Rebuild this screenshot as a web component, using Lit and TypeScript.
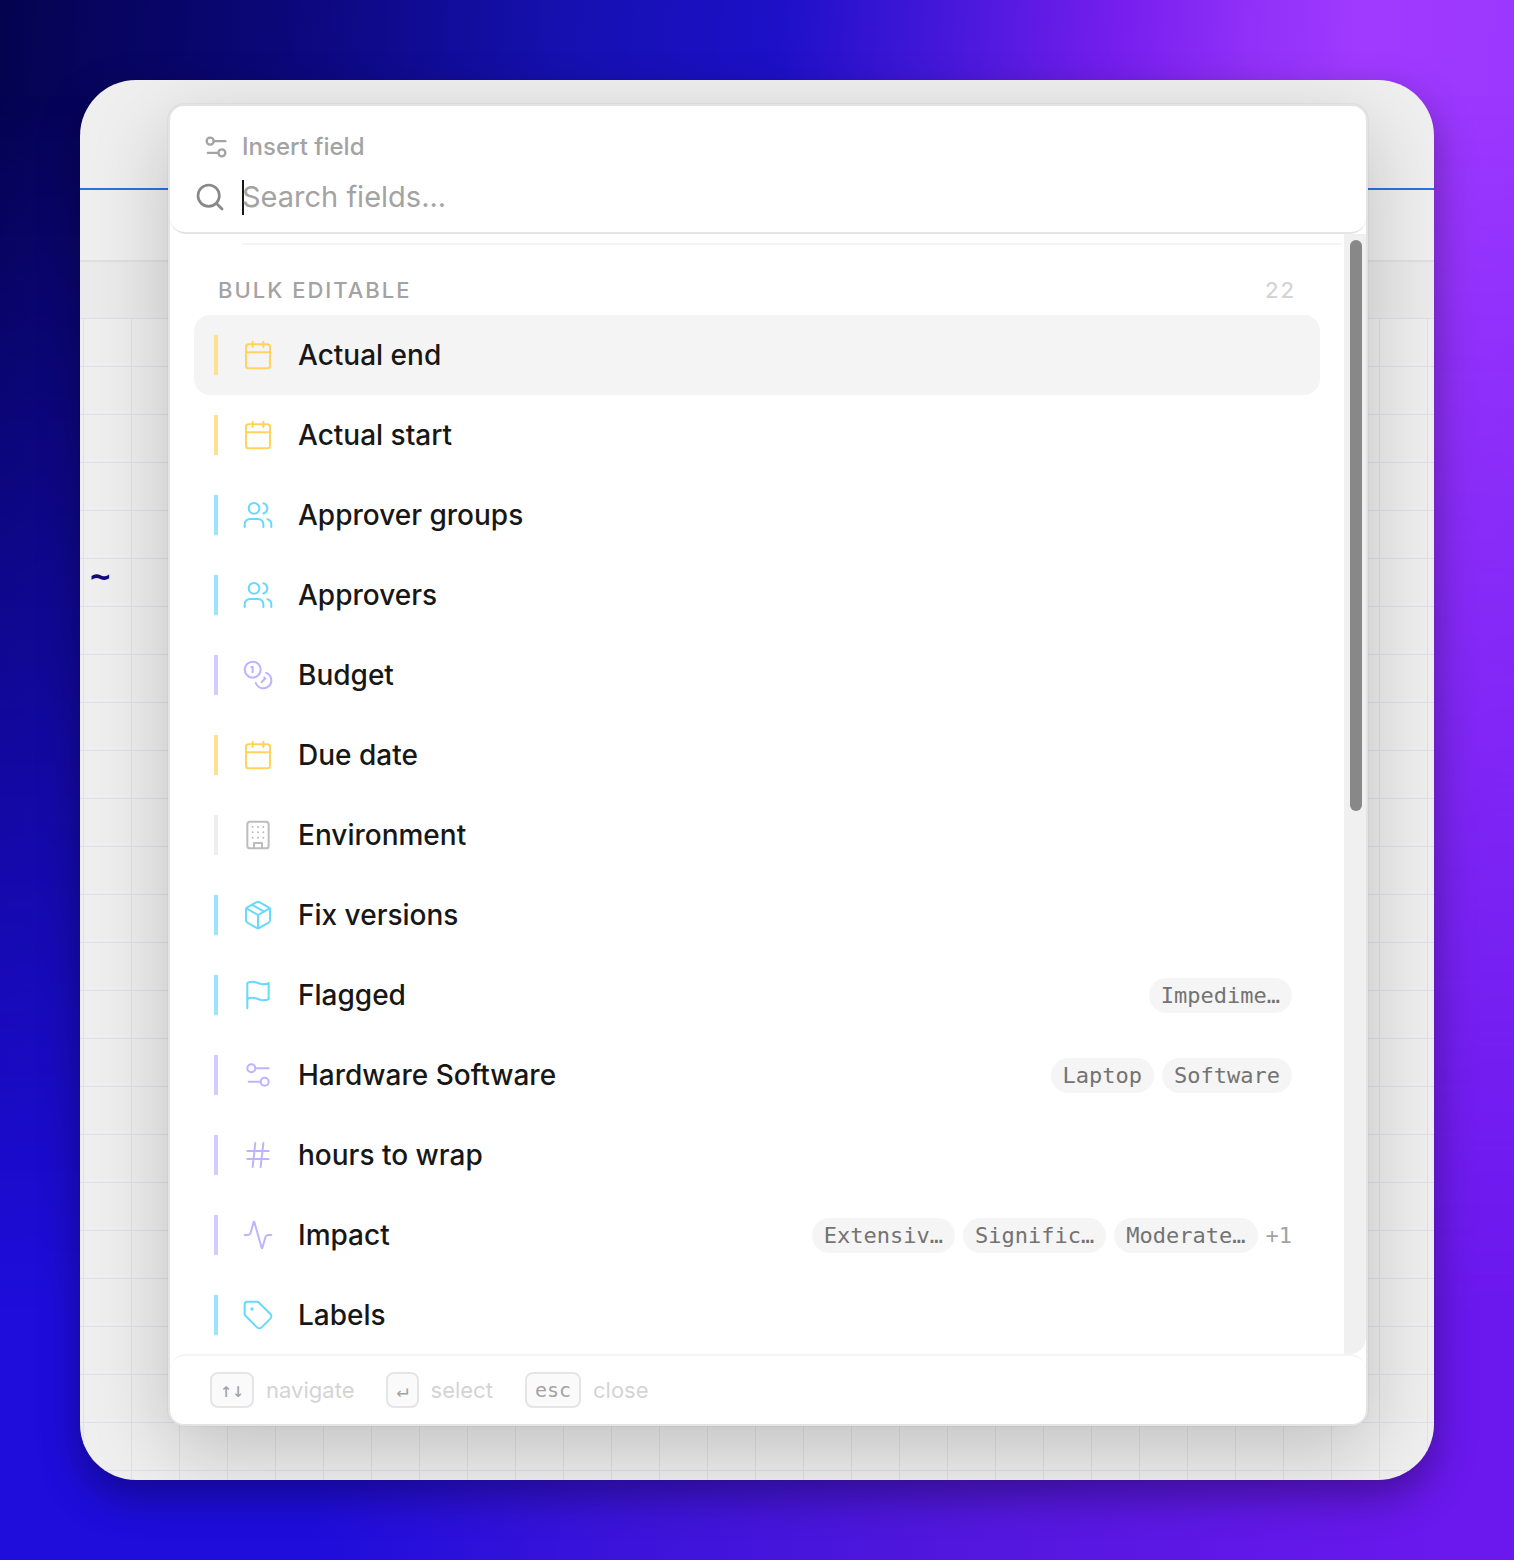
import { LitElement, html, css, svg, nothing, type SVGTemplateResult } from "lit";
import { customElement, property, state } from "lit/decorators.js";
import { classMap } from "lit/directives/class-map.js";
import { styleMap } from "lit/directives/style-map.js";

const ICONS: Record<string, SVGTemplateResult> = {
  settings: svg`<path d="M20 7h-9"/><path d="M14 17H5"/><circle cx="17" cy="17" r="3"/><circle cx="7" cy="7" r="3"/>`,
  search: svg`<circle cx="11" cy="11" r="8"/><path d="m21 21-4.3-4.3"/>`,
  calendar: svg`<path d="M8 2v4"/><path d="M16 2v4"/><rect width="18" height="18" x="3" y="4" rx="2"/><path d="M3 10h18"/>`,
  users: svg`<path d="M16 21v-2a4 4 0 0 0-4-4H6a4 4 0 0 0-4 4v2"/><circle cx="9" cy="7" r="4"/><path d="M22 21v-2a4 4 0 0 0-3-3.87"/><path d="M16 3.13a4 4 0 0 1 0 7.75"/>`,
  coins: svg`<circle cx="8" cy="8" r="6"/><path d="M18.09 10.37A6 6 0 1 1 10.34 18"/><path d="M7 6h1v4"/><path d="m16.71 13.88.7.71-2.82 2.82"/>`,
  building: svg`<rect width="16" height="20" x="4" y="2" rx="2"/><path d="M9 22v-4h6v4"/><path d="M8 6h.01M12 6h.01M16 6h.01M8 10h.01M12 10h.01M16 10h.01M8 14h.01M12 14h.01M16 14h.01"/>`,
  package: svg`<path d="m7.5 4.27 9 5.15"/><path d="M21 8a2 2 0 0 0-1-1.73l-7-4a2 2 0 0 0-2 0l-7 4A2 2 0 0 0 3 8v8a2 2 0 0 0 1 1.73l7 4a2 2 0 0 0 2 0l7-4A2 2 0 0 0 21 16Z"/><path d="m3.3 7 8.7 5 8.7-5"/><path d="M12 22V12"/>`,
  flag: svg`<path d="M4 15s1-1 4-1 5 2 8 2 4-1 4-1V3s-1 1-4 1-5-2-8-2-4 1-4 1z"/><path d="M4 22v-7"/>`,
  hash: svg`<path d="M4 9h16"/><path d="M4 15h16"/><path d="M10 3 8 21"/><path d="m16 3-2 18"/>`,
  activity: svg`<path d="M22 12h-2.48a2 2 0 0 0-1.93 1.46l-2.35 8.36a.25.25 0 0 1-.48 0L9.24 2.18a.25.25 0 0 0-.48 0l-2.35 8.36A2 2 0 0 1 4.49 12H2"/>`,
  tag: svg`<path d="M12.586 2.586A2 2 0 0 0 11.172 2H4a2 2 0 0 0-2 2v7.172a2 2 0 0 0 .586 1.414l8.704 8.704a2.426 2.426 0 0 0 3.42 0l6.58-6.58a2.426 2.426 0 0 0 0-3.42z"/><circle cx="7.5" cy="7.5" r=".5" fill="currentColor"/>`,
};

type Tone = "amber" | "sky" | "violet" | "gray";

interface Field {
  name: string;
  icon: string;
  tone: Tone;
  values?: string[];
  more?: number;
}

const FIELDS: Field[] = [
  { name: "Actual end", icon: "calendar", tone: "amber" },
  { name: "Actual start", icon: "calendar", tone: "amber" },
  { name: "Approver groups", icon: "users", tone: "sky" },
  { name: "Approvers", icon: "users", tone: "sky" },
  { name: "Budget", icon: "coins", tone: "violet" },
  { name: "Due date", icon: "calendar", tone: "amber" },
  { name: "Environment", icon: "building", tone: "gray" },
  { name: "Fix versions", icon: "package", tone: "sky" },
  { name: "Flagged", icon: "flag", tone: "sky", values: ["Impedime…"] },
  { name: "Hardware Software", icon: "settings", tone: "violet", values: ["Laptop", "Software"] },
  { name: "hours to wrap", icon: "hash", tone: "violet" },
  { name: "Impact", icon: "activity", tone: "violet", values: ["Extensiv…", "Signific…", "Moderate…"], more: 1 },
  { name: "Labels", icon: "tag", tone: "sky" },
];

@customElement("line-icon")
class LineIcon extends LitElement {
  @property() name = "";

  static styles = css`
    :host {
      display: block;
      flex: none;
      width: 32px;
      height: 32px;
    }
    .icon {
      display: block;
      width: 100%;
      height: 100%;
      fill: none;
      stroke: currentColor;
      stroke-width: var(--icon-stroke, 1.5);
      stroke-linecap: round;
      stroke-linejoin: round;
    }
  `;

  render() {
    return html`<svg class="icon" viewBox="0 0 24 24" aria-hidden="true">${ICONS[this.name]}</svg>`;
  }
}

@customElement("field-row")
class FieldRow extends LitElement {
  @property({ attribute: false }) field!: Field;
  @property({ type: Boolean }) active = false;

  static styles = css`
    :host {
      display: block;
    }
    .row {
      display: flex;
      align-items: center;
      gap: 24px;
      box-sizing: border-box;
      width: 100%;
      height: 80px;
      padding: 0 28px 0 20px;
      border: 0;
      border-radius: 16px;
      background: transparent;
      color: #171717;
      font: 500 28px/40px Inter, "Liberation Sans", sans-serif;
      text-align: left;
      cursor: pointer;
    }
    .active {
      background: #f4f4f4;
    }
    .bar {
      flex: none;
      width: 4px;
      height: 40px;
      background: var(--bar);
    }
    .glyph {
      color: var(--glyph);
      --icon-stroke: 1.5;
    }
    .name {
      flex: 1;
      min-width: 0;
      overflow: hidden;
      white-space: nowrap;
      text-overflow: ellipsis;
    }
    .values {
      display: flex;
      align-items: center;
      gap: 8px;
      font: 400 22px/35px "DejaVu Sans Mono", monospace;
    }
    .chip {
      padding: 0 12px;
      border-radius: 18px;
      background: #f5f5f5;
      color: #737373;
    }
    .more {
      color: #a3a3a3;
    }
    .amber {
      --bar: #ffe08f;
      --glyph: #ffd35c;
    }
    .sky {
      --bar: #99e5ff;
      --glyph: #66d9ff;
    }
    .violet {
      --bar: #d3ccff;
      --glyph: #beb3ff;
    }
    .gray {
      --bar: #eeeeee;
      --glyph: #bdbdbd;
    }
  `;

  render() {
    const { name, icon, tone, values, more } = this.field;
    return html`
      <button type="button" class=${classMap({ row: true, active: this.active, [tone]: true })}>
        <span class="bar"></span>
        <line-icon class="glyph" name=${icon}></line-icon>
        <span class="name">${name}</span>
        ${values
          ? html`<span class="values">
              ${values.map((v) => html`<span class="chip">${v}</span>`)}
              ${more ? html`<span class="more">+${more}</span>` : nothing}
            </span>`
          : nothing}
      </button>
    `;
  }
}

@customElement("app-root")
class AppRoot extends LitElement {
  @state() private active = 0;
  @state() private query = "";
  private readonly visibleRatio = 0.515;

  static styles = css`
    :host {
      display: block;
      font-family: Inter, "Liberation Sans", sans-serif;
    }
    .desktop {
      display: grid;
      grid-template: minmax(0, 1fr) / minmax(0, 1fr);
      height: 100vh;
      background: linear-gradient(
        94deg,
        #04034f 0%,
        #0b0778 17%,
        #1610b0 35%,
        #1d10c8 48%,
        #4818dc 59%,
        #761eee 69%,
        #9030f8 77%,
        #a03aff 84%,
        #9a36ff 96%
      );
    }
    .glow,
    .window {
      grid-area: 1 / 1;
    }
    .glow {
      background: linear-gradient(94deg, #1e0ddb 0%, #1e0ddb 26%, #3a13da 44%, #5217de 66%, #6a18ee 96%);
      mask-image: linear-gradient(180deg, transparent 6%, #000 84%);
    }
    .window {
      z-index: 1;
      margin: 80px;
      display: grid;
      grid-template: minmax(0, 1fr) / minmax(0, 1fr);
      overflow: hidden;
      border-radius: 56px;
      background: #efefef;
      box-shadow: 0 16px 40px rgba(0, 0, 0, 0.35);
    }
    .sheet,
    .palette {
      grid-area: 1 / 1;
    }
    .sheet {
      display: flex;
      flex-direction: column;
    }
    .toolbar {
      height: 108px;
      border-bottom: 2px solid #2573e8;
    }
    .formula {
      height: 70px;
      border-bottom: 2px solid #e0e0e0;
    }
    .columns {
      height: 56px;
      background: #ebebeb;
    }
    .cells {
      flex: 1;
      padding: 240px 10px 0;
      background-image:
        linear-gradient(#e3dcec 1px, transparent 1px),
        linear-gradient(90deg, #e1dfec 1px, transparent 1px);
      background-size: 48px 48px;
      background-position: 3px 0;
      color: #14087a;
      font: 700 34px/36px "DejaVu Sans Mono", monospace;
    }
    .palette {
      display: flex;
      flex-direction: column;
      min-height: 0;
      margin: 24px 66px 54px 88px;
      border: 2px solid #e3e3e3;
      border-radius: 16px;
      background: #fff;
      box-shadow:
        0 0 0 1px rgba(0, 0, 0, 0.03),
        0 24px 80px rgba(0, 0, 0, 0.2);
    }
    .head {
      display: flex;
      flex-direction: column;
      gap: 5px;
      box-sizing: border-box;
      height: 128px;
      padding: 23px 24px 0;
      border-bottom: 2px solid #e5e5e5;
      border-radius: 14px 14px 16px 16px;
    }
    .title {
      display: flex;
      align-items: center;
      gap: 12px;
      padding-left: 8px;
      color: #a3a3a3;
      font-size: 24px;
      font-weight: 500;
      line-height: 36px;
    }
    .title-icon {
      width: 28px;
      height: 28px;
      --icon-stroke: 2;
    }
    .search {
      display: flex;
      align-items: center;
      gap: 16px;
      height: 54px;
    }
    .search-icon {
      color: #888;
      --icon-stroke: 2;
    }
    .entry {
      flex: 1;
      display: flex;
      align-items: center;
    }
    .caret {
      flex: none;
      width: 2px;
      height: 35px;
      margin-right: -2px;
      background: #171717;
    }
    .input {
      flex: 1;
      min-width: 0;
      padding: 0;
      border: 0;
      outline: 0;
      background: transparent;
      color: #171717;
      font: 400 29px/40px Inter, "Liberation Sans", sans-serif;
    }
    .input::placeholder {
      color: #a3a3a3;
      opacity: 1;
    }
    .body {
      flex: 1;
      min-height: 0;
      display: flex;
    }
    .list {
      flex: 1;
      min-width: 0;
      overflow: hidden;
      padding: 9px 24px 0;
    }
    .rule {
      height: 2px;
      margin: 0 -22px 0 48px;
      background: #f4f4f4;
    }
    .group {
      display: flex;
      justify-content: space-between;
      align-items: center;
      margin: 0;
      padding: 26px 24px 6px;
      color: #a3a3a3;
      font-size: 22px;
      font-weight: 500;
      line-height: 38px;
      letter-spacing: 2px;
    }
    .count {
      color: #d4d4d4;
    }
    .track {
      flex: none;
      box-sizing: border-box;
      width: 22px;
      padding: 6px 4px 6px 6px;
      border-bottom-right-radius: 16px;
      background: #f0f0f0;
    }
    .thumb {
      border-radius: 6px;
      background: #888;
    }
    .foot {
      display: flex;
      align-items: center;
      gap: 32px;
      height: 68px;
      padding: 0 40px;
      border-top: 2px solid #f4f4f4;
      border-radius: 16px 16px 14px 14px;
    }
    .hint {
      display: flex;
      align-items: center;
      gap: 12px;
      color: #d4d4d4;
      font-size: 22px;
      line-height: 36px;
    }
    .key {
      box-sizing: border-box;
      height: 36px;
      padding: 0 8px;
      border: 2px solid #e5e5e5;
      border-radius: 8px;
      background: #fafafa;
      color: #a3a3a3;
      font: 400 20px/32px "DejaVu Sans Mono", monospace;
    }
  `;

  private onInput(e: Event) {
    this.query = (e.target as HTMLInputElement).value;
  }

  render() {
    const q = this.query.toLowerCase();
    const fields = FIELDS.filter((f) => f.name.toLowerCase().includes(q));
    return html`
      <div class="desktop">
        <div class="glow"></div>
        <main class="window">
          <div class="sheet">
            <div class="toolbar"></div>
            <div class="formula"></div>
            <div class="columns"></div>
            <div class="cells">~</div>
          </div>
          <section class="palette">
            <header class="head">
              <label class="title" for="field-search">
                <line-icon class="title-icon" name="settings"></line-icon>Insert field
              </label>
              <div class="search">
                <line-icon class="search-icon" name="search"></line-icon>
                <div class="entry">
                  ${this.query ? nothing : html`<span class="caret"></span>`}
                  <input id="field-search" class="input" type="text" placeholder="Search fields..." @input=${this.onInput} />
                </div>
              </div>
            </header>
            <div class="body">
              <div class="list">
                <div class="rule"></div>
                <h2 class="group">BULK EDITABLE<span class="count">22</span></h2>
                ${fields.map(
                  (f, i) => html`<field-row .field=${f} ?active=${i === this.active} @click=${() => (this.active = i)}></field-row>`,
                )}
              </div>
              <div class="track">
                <div class="thumb" style=${styleMap({ height: `${this.visibleRatio * 100}%` })}></div>
              </div>
            </div>
            <footer class="foot">
              <span class="hint"><kbd class="key">↑↓</kbd>navigate</span>
              <span class="hint"><kbd class="key">↵</kbd>select</span>
              <span class="hint"><kbd class="key">esc</kbd>close</span>
            </footer>
          </section>
        </main>
      </div>
    `;
  }
}
